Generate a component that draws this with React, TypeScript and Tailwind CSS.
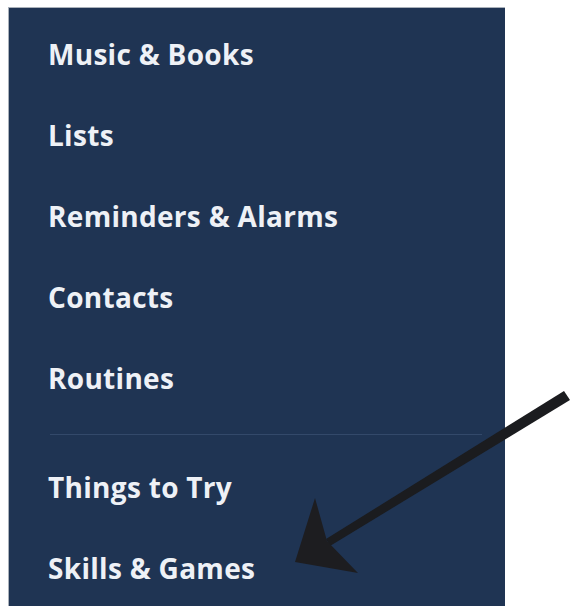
const items = ["Music & Books", "Lists", "Reminders & Alarms", "Contacts", "Routines"];
const more = ["Things to Try", "Skills & Games"];

function MenuItem({ label }: { label: string }) {
  return (
    <li className="pl-[39px] text-[28px] font-bold leading-[81px] tracking-[0.3px] text-[#eef1f6]">
      {label}
    </li>
  );
}

function Arrow() {
  return (
    <svg
      className="pointer-events-none absolute left-0 top-0"
      width="570"
      height="606"
      viewBox="0 0 570 606"
    >
      {/* shaft, a little thicker at the far end */}
      <polygon points="564,391 570,400 330,546 326,539" fill="#1b1c1f" />
      {/* head */}
      <polygon points="315,498 327,541 358,573 295,562" fill="#1d1d20" />
    </svg>
  );
}

export default function App() {
  return (
    <div className="relative h-[606px] w-[570px] overflow-hidden bg-white font-['Open_Sans',sans-serif]">
      <div className="ml-[8px] mt-[7px] h-[599px] w-[497px] border-l border-t border-[#aab1ba] bg-[#1f3453] pt-[6px]">
        <ul>
          {items.map((label) => (
            <MenuItem key={label} label={label} />
          ))}
        </ul>
        <div className="ml-[41px] mr-[23px] mt-[15px] h-px bg-[#33496a]" />
        <ul className="mt-[12px]">
          {more.map((label) => (
            <MenuItem key={label} label={label} />
          ))}
        </ul>
      </div>
      <Arrow />
    </div>
  );
}
